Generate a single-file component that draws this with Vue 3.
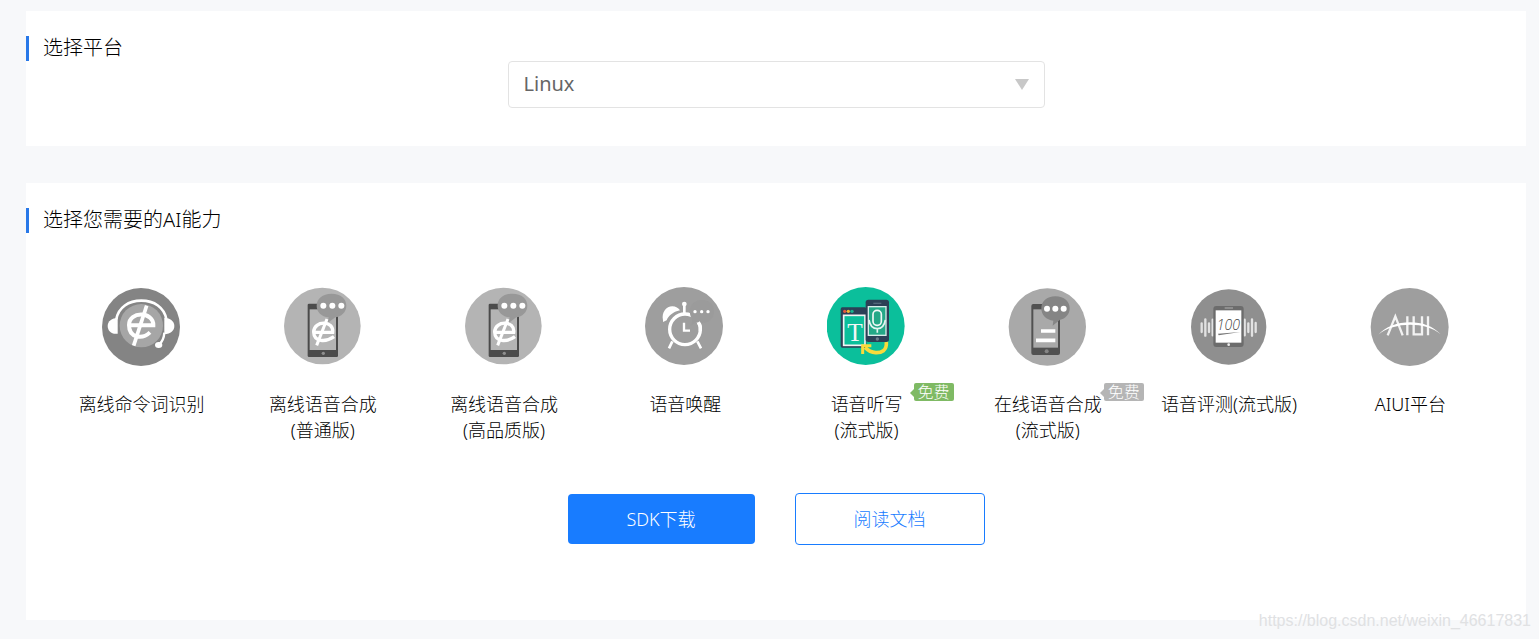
<script setup>
import { ref } from 'vue'

const platforms = ['Linux', 'Android', 'iOS', 'Windows', 'Java']
const platform = ref('Linux')

const abilities = [
  { icon: 'headset', lines: ['离线命令词识别'] },
  { icon: 'tts', lines: ['离线语音合成', '(普通版)'] },
  { icon: 'tts', lines: ['离线语音合成', '(高品质版)'] },
  { icon: 'alarm', lines: ['语音唤醒'] },
  { icon: 'dictation', lines: ['语音听写', '(流式版)'], tag: 'green' },
  { icon: 'online', lines: ['在线语音合成', '(流式版)'], tag: 'gray' },
  { icon: 'score', lines: ['语音评测(流式版)'] },
  { icon: 'aiui', lines: ['AIUI平台'] },
]
</script>

<template>
  <main class="page">
    <section class="card platform">
      <h2 class="title"><label for="platform">选择平台</label></h2>
      <div class="picker">
        <select id="platform" v-model="platform">
          <option v-for="p in platforms" :key="p">{{ p }}</option>
        </select>
        <svg class="arrow" viewBox="0 0 14 11" aria-hidden="true"><path d="M0 0H14L7 11Z" fill="#c8c8c8" /></svg>
      </div>
    </section>

    <section class="card abilities">
      <h2 class="title">选择您需要的AI能力</h2>
      <ul class="grid">
        <li v-for="(a, i) in abilities" :key="i" class="item">
          <svg class="icon" viewBox="33 21 240 240" aria-hidden="true">
            <g v-if="a.icon === 'headset'" transform="translate(-2 0)">
              <circle cx="152" cy="141" r="117" fill="#848484" />
              <circle cx="153" cy="137" r="65" fill="#a6a6a6" />
              <path d="M78 118C84 82 115 62 153 62S222 82 228 118" fill="none" stroke="#fff" stroke-width="8" />
              <path d="M82 114V161C64 164 52 153 52 138S65 114 82 114Z" fill="#fff" />
              <path d="M222 114C240 114 252 124 252 138S241 162 222 163Z" fill="#fff" />
              <path d="M222 158C221 174 217 184 207 193" fill="none" stroke="#fff" stroke-width="7" />
              <ellipse cx="205" cy="195" rx="11" ry="9" fill="#fff" />
              <path d="M116 136H189C190 94 116 92 116 135C116 174 156 179 179 157" fill="none" stroke="#fff" stroke-width="12" />
              <path d="M169 77L130 197" stroke="#fff" stroke-width="11" />
            </g>
            <g v-else-if="a.icon === 'tts'">
              <circle cx="151" cy="138" r="115" fill="#b4b4b4" />
              <rect x="107" y="71" width="91" height="160" rx="4" fill="#4b4b4b" />
              <rect x="113" y="88" width="79" height="122" fill="#b4b4b4" />
              <circle cx="154" cy="220" r="5" fill="#8e8e8e" />
              <path d="M179 41C207 41 223 56 223 77C223 97 207 110 190 112L166 130L170 112C148 110 134 96 134 77C134 56 151 41 179 41Z" fill="#989898" />
              <g fill="#fff"><circle cx="154" cy="77" r="9" /><circle cx="181" cy="77" r="9" /><circle cx="208" cy="77" r="9" /></g>
              <path d="M125 157H182C187 121 126 120 125 156C126 187 162 187 186 170" fill="none" stroke="#fff" stroke-width="10" />
              <path d="M165 117L134 196" stroke="#fff" stroke-width="9" />
            </g>
            <g v-else-if="a.icon === 'alarm'">
              <circle cx="150" cy="138" r="117" fill="#9e9e9e" />
              <path d="M87 121C82 96 97 79 115 79C125 79 134 84 138 91C116 96 104 107 98 121L87 126Z" fill="#fff" />
              <circle cx="153" cy="148" r="46" fill="none" stroke="#fff" stroke-width="10" />
              <path d="M151 72V103M115 184L105 205M190 184L201 205" stroke="#fff" stroke-width="8" />
              <circle cx="151" cy="72" r="7" fill="#fff" />
              <path d="M150 128V152H168" fill="none" stroke="#fff" stroke-width="7" />
              <path d="M204 60C226 60 240 74 240 95C240 115 224 129 203 129C196 129 190 128 186 126C181 131 176 134 170 136C175 129 176 123 173 116C158 84 176 60 204 60Z" fill="#9b9b9b" />
              <path d="M193 127C198 134 200 143 199 153" fill="none" stroke="#fff" stroke-width="10" />
              <g fill="#fff"><circle cx="183" cy="95" r="5" /><circle cx="203" cy="95" r="5" /><circle cx="222" cy="95" r="5" /></g>
            </g>
            <g v-else-if="a.icon === 'dictation'" transform="translate(-2 0)">
              <circle cx="151" cy="138" r="117" fill="#0bbf9b" />
              <rect x="76" y="82" width="77" height="121" rx="5" fill="#2c4056" />
              <rect x="85" y="106" width="64" height="90" fill="#0bbf9b" stroke="#f2f5f4" stroke-width="5" />
              <circle cx="88" cy="94" r="5" fill="#e2543e" />
              <circle cx="99" cy="94" r="5" fill="#f2b632" />
              <circle cx="110" cy="94" r="5" fill="#17b28d" />
              <text class="letter" x="119" y="184" text-anchor="middle">T</text>
              <rect x="151" y="59" width="70" height="127" rx="8" fill="#2c4056" />
              <rect x="159" y="80" width="53" height="86" fill="#24a887" stroke="#d7eeea" stroke-width="4" />
              <path d="M174 70H198" stroke="#54687b" stroke-width="4" />
              <circle cx="186" cy="177" r="5" fill="#6d7c8c" />
              <rect x="173" y="91" width="25" height="45" rx="12" fill="#24a887" stroke="#f2f8f6" stroke-width="5" />
              <path d="M161 120C164 139 174 146 186 146S207 138 210 120M186 146V158" fill="none" stroke="#e4f5f1" stroke-width="5" />
              <path d="M213 186C215 212 198 219 181 218C169 217 159 212 149 202" fill="none" stroke="#f8db3b" stroke-width="11" />
              <path d="M168 197H142V222" fill="none" stroke="#f8db3b" stroke-width="9" />
            </g>
            <g v-else-if="a.icon === 'online'">
              <circle cx="151" cy="141" r="116" fill="#a9a9a9" />
              <rect x="103" y="72" width="86" height="153" rx="6" fill="#515151" />
              <rect x="109" y="88" width="74" height="115" fill="#a9a9a9" />
              <circle cx="149" cy="214" r="6" fill="#858585" />
              <path d="M175 49C202 49 218 65 218 85C218 103 206 116 188 120L167 137L169 122C148 120 133 106 133 85C133 64 149 49 175 49Z" fill="#858585" />
              <g fill="#fff"><circle cx="150" cy="86" r="9" /><circle cx="175" cy="86" r="9" /><circle cx="200" cy="86" r="9" /></g>
              <path d="M132 153H175M117 181H175" stroke="#fff" stroke-width="11" />
            </g>
            <g v-else-if="a.icon === 'score'">
              <circle cx="152" cy="141" r="113" fill="#8f8f8f" />
              <path d="M71 130V156M82 118V167M93 130V156M104 119V166M200 119V166M211 130V156M222 118V167M233 129V156" stroke="#e2e2e2" stroke-width="7" stroke-linecap="round" />
              <rect x="106" y="78" width="91" height="123" rx="9" fill="#6c6c6c" />
              <rect x="113" y="91" width="77" height="97" fill="#fff" />
              <path d="M140 84H165" stroke="#a0a0a0" stroke-width="4" />
              <circle cx="152" cy="194" r="4" fill="#eee" />
              <text class="mark" x="151" y="150" text-anchor="middle">100</text>
              <path d="M120 161L187 156L122 166Z" fill="#777" />
            </g>
            <g v-else transform="translate(2 0)">
              <circle cx="150" cy="141" r="117" fill="#9e9e9e" />
              <path d="M84 166L107 109L129 166M143 109V166M162 109V163H187V109M205 109V166" fill="none" stroke="#f2f2f2" stroke-width="7" />
              <path d="M56 164C94 119 196 110 243 163C197 124 103 126 56 164Z" fill="#fff" />
            </g>
          </svg>
          <p class="label"><span v-for="line in a.lines" :key="line">{{ line }}</span></p>
          <span v-if="a.tag" class="tag" :class="a.tag">免费</span>
        </li>
      </ul>
      <div class="actions">
        <button type="button" class="btn primary">SDK下载</button>
        <button type="button" class="btn outline">阅读文档</button>
      </div>
    </section>
    <span class="watermark">https://blog.csdn.net/weixin_46617831</span>
  </main>
</template>

<style>
body {
  background: #f7f8fa;
}
</style>

<style scoped>
.page {
  position: relative;
  box-sizing: border-box;
  padding: 11px 13px 19px 26px;
  display: flex;
  flex-direction: column;
  gap: 37px;
  font-family: "Noto Sans", "Noto Sans CJK SC", sans-serif;
  font-size: 18px;
  color: #000;
}
.card {
  background: #fff;
  padding-top: 25px;
}
.platform {
  padding-bottom: 38px;
}
.abilities {
  padding-bottom: 75px;
}
.title {
  box-sizing: border-box;
  height: 25px;
  margin: 0;
  padding-left: 14px;
  border-left: 3px solid #2878e8;
  font-size: 20px;
  font-weight: 300;
  line-height: 23px;
}
.picker {
  position: relative;
  width: 537px;
  max-width: 90%;
  margin: 0 auto;
}
select {
  display: block;
  appearance: none;
  box-sizing: border-box;
  width: 100%;
  height: 47px;
  padding: 0 48px 2px 15px;
  border: 1px solid #e3e3e3;
  border-radius: 4px;
  background: #fff;
  font-family: inherit;
  font-size: 20px;
  color: #666;
}
.arrow {
  position: absolute;
  right: 16px;
  top: 18px;
  width: 14px;
  height: 11px;
  pointer-events: none;
}
.grid {
  list-style: none;
  margin: 54px 0 0;
  padding: 0 25px;
  display: grid;
  grid-template-columns: repeat(8, 1fr);
}
.item {
  position: relative;
  display: flex;
  flex-direction: column;
  align-items: center;
  gap: 24px;
}
.icon {
  width: 80px;
  height: 80px;
}
.letter {
  font: 76px "Liberation Serif", serif;
  fill: #f4f7f6;
}
.mark {
  font: italic 300 42px "Open Sans", sans-serif;
  fill: #444;
}
.label {
  margin: 0;
  display: flex;
  flex-direction: column;
  align-items: center;
  line-height: 26px;
  font-weight: 300;
  white-space: nowrap;
}
.tag {
  position: absolute;
  top: 96px;
  left: calc(50% + 47px);
  width: 40px;
  height: 18px;
  border-radius: 2px;
  font-size: 16px;
  font-weight: 300;
  line-height: 18px;
  text-align: center;
  color: #fff;
  background: #7fba64;
}
.tag::before {
  content: "";
  position: absolute;
  left: -4px;
  top: 6px;
  border: 4px solid transparent;
  border-left-width: 0;
  border-right-color: #7fba64;
}
.tag.gray {
  left: calc(50% + 56px);
  background: #b5b5b5;
}
.tag.gray::before {
  border-right-color: #b5b5b5;
}
.actions {
  margin-top: 50px;
  display: flex;
  justify-content: center;
  align-items: center;
  gap: 40px;
}
.btn {
  box-sizing: border-box;
  padding: 0 0 2px;
  border-radius: 4px;
  font-family: inherit;
  font-size: 18px;
  font-weight: 300;
  cursor: pointer;
}
.primary {
  width: 187px;
  height: 50px;
  border: 0;
  background: #187cff;
  color: #fff;
}
.outline {
  width: 190px;
  height: 52px;
  border: 1px solid #187cff;
  background: #fff;
  color: #187cff;
}
.watermark {
  position: absolute;
  right: 8px;
  bottom: 8px;
  font-family: "Liberation Sans", sans-serif;
  font-size: 16px;
  line-height: 20px;
  color: #e0e1e3;
}
</style>
